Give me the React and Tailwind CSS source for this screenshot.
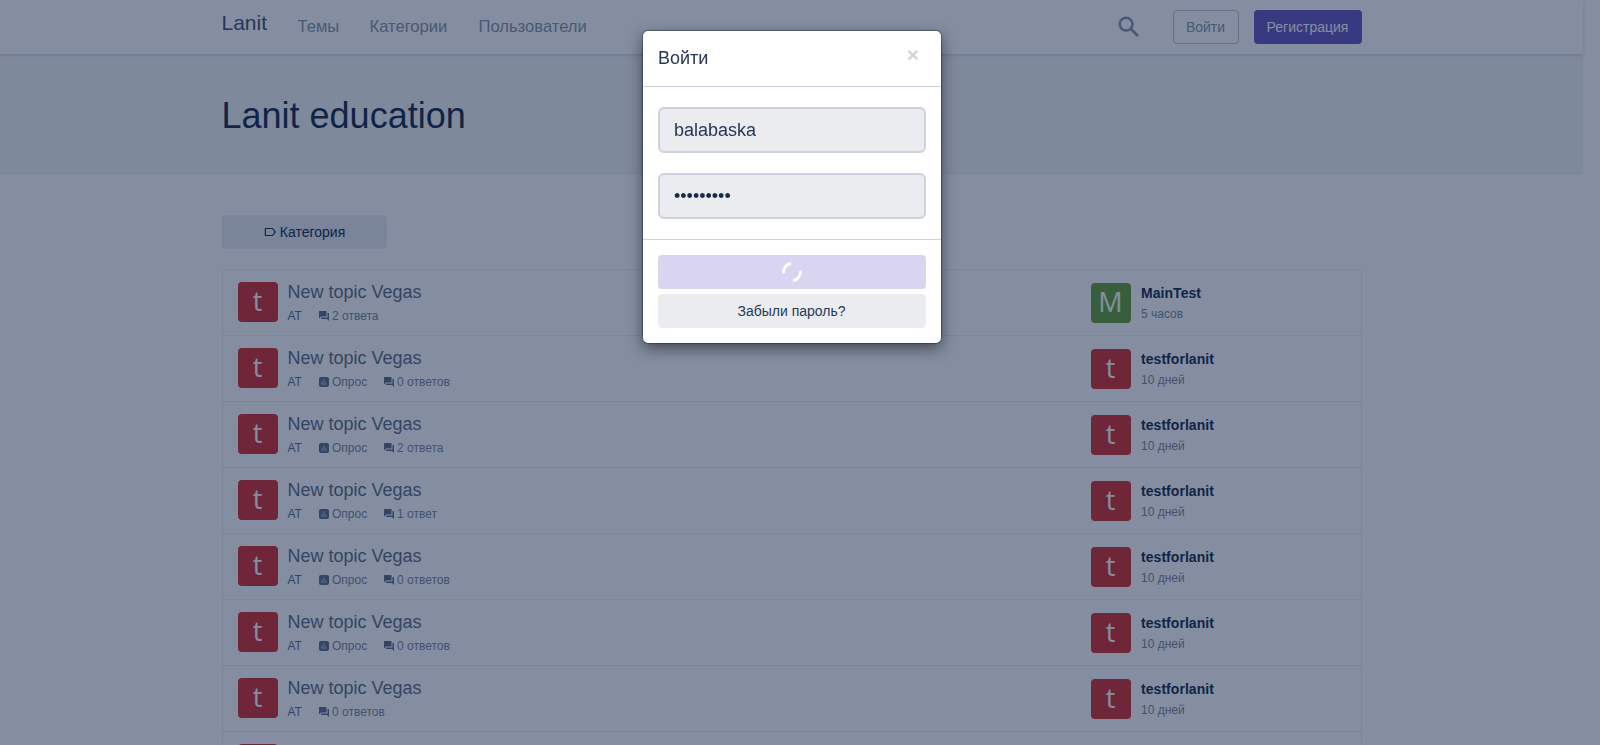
import React from "react";
import { MdLabelOutline, MdForum } from "react-icons/md";

const topics = [
  { poll: false, replies: "2 ответа", user: "MainTest", time: "5 часов" },
  { poll: true, replies: "0 ответов", user: "testforlanit", time: "10 дней" },
  { poll: true, replies: "2 ответа", user: "testforlanit", time: "10 дней" },
  { poll: true, replies: "1 ответ", user: "testforlanit", time: "10 дней" },
  { poll: true, replies: "0 ответов", user: "testforlanit", time: "10 дней" },
  { poll: true, replies: "0 ответов", user: "testforlanit", time: "10 дней" },
  { poll: false, replies: "0 ответов", user: "testforlanit", time: "10 дней" },
];

function Avatar({ letter }) {
  const color = letter === "M" ? "bg-[#689f38]" : "bg-[#d32f2f]";
  return (
    <div
      className={`flex h-10 w-10 shrink-0 items-center justify-center rounded-[4px] [font-family:'Open_Sans','Noto_Sans',sans-serif] text-[27px] leading-[40px] text-white ${color}`}
    >
      <span className="pb-[2px]">{letter}</span>
    </div>
  );
}

function SearchIcon() {
  return (
    <svg width="28" height="28" viewBox="0 0 24 24" fill="none" stroke="#8993a4" strokeWidth="2.1" className="mr-[30px]">
      <circle cx="9.5" cy="9.5" r="5.5" />
      <path d="M13.6 13.6l1.2 1.2" strokeWidth="2.4" />
      <path d="M14.4 14.4l5.3 5.3" strokeWidth="2.3" />
    </svg>
  );
}

function PollIcon() {
  return (
    <svg width="12" height="12" viewBox="0 0 12 12" className="shrink-0">
      <rect x="1" y="1" width="10" height="10" rx="2" fill="#5e6c84" />
      <path d="M3.5 5.5h1V9h-1zM5.5 3.5h1V9h-1zM7.5 6.5h1V9h-1z" fill="#fff" fillOpacity="0.6" />
    </svg>
  );
}

function TopicRow({ topic }) {
  return (
    <li className="flex h-[66px] border-b border-[#ebecf0] pl-[15px]">
      <div className="flex w-[853px] pt-3">
        <Avatar letter="t" />
        <div className="pl-[10px]">
          <div className="h-[24px] text-[18px] leading-[20px] text-[#5e6c84]">New topic Vegas</div>
          <div className="flex h-5 items-center text-[12px] leading-[20px] text-[#7a869a]">
            <span className="w-[30px] text-[#5e6c84]">AT</span>
            {topic.poll && (
              <span className="flex w-[65px] items-center gap-[2.5px]">
                <PollIcon />
                Опрос
              </span>
            )}
            <span className="flex items-center gap-[2.5px]">
              <MdForum size={12} className="shrink-0 text-[#5e6c84]" />
              {topic.replies}
            </span>
          </div>
        </div>
      </div>
      <div className="flex pt-[13px]">
        <Avatar letter={topic.user[0]} />
        <div className="pl-[10.5px]">
          <div className="h-[21px] text-[14px] font-bold leading-[20px] tracking-[0.05px] text-[#172b4d]">{topic.user}</div>
          <div className="text-[12px] leading-[20px] text-[#7a869a]">{topic.time}</div>
        </div>
      </div>
    </li>
  );
}

function Spinner() {
  return (
    <svg width="22" height="22" viewBox="-11 -11 22 22" fill="none" stroke="#fff" strokeWidth="3">
      <path d="M-8.4 1.2A8.5 8.5 0 0 1-1.2-8.4" />
      <path d="M8.4-1.2A8.5 8.5 0 0 1 1.2 8.4" />
    </svg>
  );
}

function LoginModal() {
  return (
    <div className="fixed inset-0 bg-[#091e42]/50">
      <div className="mt-[31px] ml-[643px] h-[312px] w-[298px] rounded-[5px] bg-white shadow-[0_5px_15px_rgba(0,0,0,0.5),0_0_1px_1px_rgba(9,30,66,0.35)]">
        <div className="flex h-[56px] justify-between border-b border-[#cfd0dd] px-[15px]">
          <h4 className="pt-[15px] text-[18px] leading-[24px] text-[#253858]">Войти</h4>
          <button className="mr-[7px] h-[24px] pt-[13px] text-[21px] font-bold leading-[22px] text-[#d0d4dc]">×</button>
        </div>
        <div className="flex h-[152px] flex-col gap-5 px-[15px] pt-5">
          <input
            readOnly
            value="balabaska"
            className="h-[46px] w-full rounded-[6px] border-2 border-[#cfd0dd] bg-[#ebecf0] px-[14px] text-[18px] text-[#253858]"
          />
          <input
            readOnly
            type="password"
            value="vegas1234"
            className="h-[46px] w-full rounded-[6px] border-2 border-[#cfd0dd] bg-[#ebecf0] px-[14px] text-[18px] text-[#172b4d]"
          />
        </div>
        <div className="flex flex-col gap-[5px] border-t border-[#cfd0dd] px-[15px] pt-[15px]">
          <button className="flex h-[34px] items-center justify-center rounded-[4px] bg-[#d9d4f0]">
            <Spinner />
          </button>
          <button className="h-[34px] rounded-[4px] bg-[#ebecf0] pr-px text-[14px] text-[#253858]">Забыли пароль?</button>
        </div>
      </div>
    </div>
  );
}

export default function App() {
  return (
    <div className="h-[745px] overflow-hidden bg-white font-['Liberation_Sans',Arial,sans-serif]">
      <div className="w-[1583px]">
        <nav className="relative h-[54px] bg-white shadow-[0_1px_3px_rgba(9,30,66,0.2)]">
          <div className="mx-auto flex w-[1140px] items-start">
            <div className="w-[76px] pt-[10px] text-[21px] leading-[26px] text-[#42526e]">Lanit</div>
            <div className="flex gap-[30px] pt-[15px] text-[16.6px] leading-[24px] text-[#8993a4]">
              <span className="w-[42px]">Темы</span>
              <span className="w-[79px]">Категории</span>
              <span>Пользователи</span>
            </div>
            <div className="ml-auto flex items-center pt-[10px]">
              <SearchIcon />
              <button className="mr-[15px] h-[34px] w-[66px] rounded-[4px] border border-[#c1c7d0] text-[14px] text-[#8993a4]">
                Войти
              </button>
              <button className="h-[34px] w-[108px] rounded-[4px] bg-[#6554c0] text-[14px] text-white">
                Регистрация
              </button>
            </div>
          </div>
        </nav>
        <header className="h-[121px] bg-[#f4f5f7]">
          <h1 className="mx-auto w-[1140px] pt-[42px] text-[36px] leading-[40px] text-[#172b4d]">Lanit education</h1>
        </header>
        <main className="mx-auto w-[1140px] pt-[40px]">
          <button className="flex h-[34px] w-[165px] items-center justify-center gap-[3px] rounded-[4px] bg-[#ebecf0] text-[14px] text-[#172b4d]">
            <MdLabelOutline size={14} />
            Категория
          </button>
          <ul className="mt-5 rounded-[4px] border border-[#ebecf0]">
            {topics.map((topic, i) => (
              <TopicRow key={i} topic={topic} />
            ))}
            <li className="h-[66px] pt-3 pl-[15px]">
              <div className="h-10 w-10 rounded-[4px] bg-[#d32f2f]" />
            </li>
          </ul>
        </main>
      </div>
      <LoginModal />
    </div>
  );
}
